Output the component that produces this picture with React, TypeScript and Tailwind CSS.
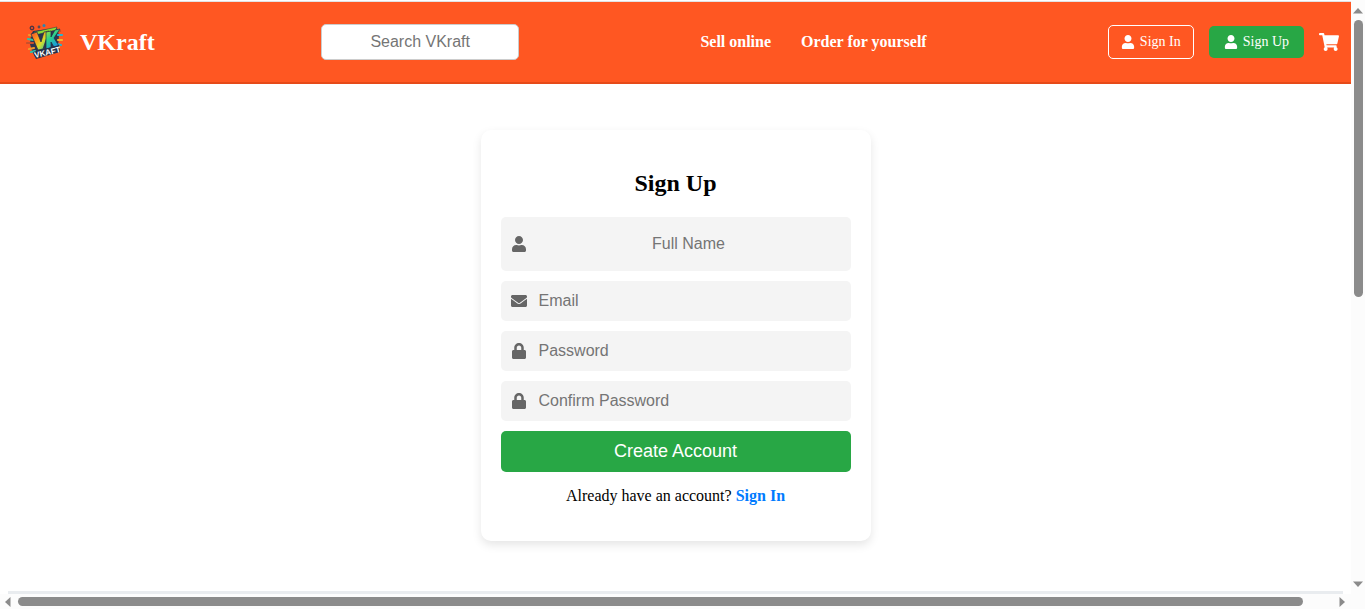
import type { ReactNode } from "react";
import { FaEnvelope, FaLock, FaShoppingCart, FaUser } from "react-icons/fa";

function Logo() {
  return (
    <svg viewBox="0 0 38 38" className="size-[38px] shrink-0" role="img" aria-label="VKraft logo">
      <defs>
        <linearGradient id="v" x1="0" y1="0" x2="1" y2="0.8">
          <stop offset="0" stopColor="#f0442c" />
          <stop offset="0.4" stopColor="#ff9a1f" />
          <stop offset="0.65" stopColor="#d6dc2c" />
          <stop offset="1" stopColor="#2cc4a0" />
        </linearGradient>
        <linearGradient id="k" x1="0" y1="0" x2="0.6" y2="1">
          <stop offset="0" stopColor="#b4e62c" />
          <stop offset="0.45" stopColor="#2fd08a" />
          <stop offset="1" stopColor="#1292ea" />
        </linearGradient>
      </defs>
      <path d="M7 8 31 5 33 12 32 24 33 29 9 34 6 28 4 21 5 12Z" fill="#2b3550" />
      <g strokeWidth="2.2" strokeLinecap="round">
        <path d="M3 12 8 13M3 26 8 25" stroke="#f09a2a" />
        <path d="M2 16 7 17M5 29 9 28" stroke="#2fc0a8" />
        <path d="M1 20H7M31 9 34 8" stroke="#c9502c" />
        <path d="M32 12H36M31 21 35 22" stroke="#22b4d0" />
        <path d="M32 17H36M30 25 33 25" stroke="#f3b52f" />
      </g>
      <circle cx="6" cy="5" r="1.9" fill="#d84b2c" stroke="#26304a" />
      <circle cx="13" cy="4" r="1.4" fill="#5a4a55" />
      <circle cx="18" cy="2.5" r="1.5" fill="#2785b5" />
      <path d="M8 9 31 4 30 7 9 12Z" fill="#8edb35" stroke="#202b45" strokeWidth="0.5" />
      <path d="M5 11 11 9 15 19 18 9 23 8 17 26 12 27Z" fill="url(#v)" stroke="#202b45" strokeWidth="0.7" />
      <path d="M20 9 25 8 25 14 29 7 34 6 28 15 33 23 28 24 25 19 25 25 20 26Z" fill="url(#k)" stroke="#202b45" strokeWidth="0.7" />
      <path d="M7 29 33 22 34 29 10 36Z" fill="#26304a" />
      <text x="9" y="35" transform="rotate(-13 9 35)" className="fill-white font-['Liberation_Sans'] text-[8px] font-bold">VKAFT</text>
    </svg>
  );
}

function Field({ id, label, type, icon }: { id: string; label: string; type: string; icon: ReactNode }) {
  const tall = id === "name";
  return (
    <div className={`flex items-center rounded-[5px] bg-[#f4f4f4] px-2.5 text-[#666] ${tall ? "h-[54px]" : "h-10"}`}>
      <label htmlFor={id} aria-label={label} className="flex w-4 shrink-0 justify-center">
        {icon}
      </label>
      <input
        id={id}
        type={type}
        aria-label={label}
        placeholder={label}
        className={`ml-3 min-w-0 flex-1 bg-transparent text-base text-black outline-none placeholder:text-[#757575] ${tall ? "pr-0.5 text-center" : ""}`}
      />
    </div>
  );
}

export default function App() {
  return (
    <div className="flex h-screen flex-col overflow-hidden bg-white font-['Liberation_Serif',serif] text-black">
      <div className="flex min-h-0 flex-1">
        <div className="flex min-w-0 flex-1 flex-col">
          <div className="mt-px h-px shrink-0 bg-[#e2e2e2]" />
          <header className="flex h-[82px] shrink-0 items-center justify-between border-b-2 border-[#e64a19] bg-[#ff5722] pr-3 pl-[26px] text-white">
            <a href="#home" className="flex w-[114px] items-center gap-4 text-2xl font-bold whitespace-nowrap">
              <Logo />
              VKraft
            </a>
            <input
              type="text"
              aria-label="Search VKraft"
              placeholder="Search VKraft"
              className="h-9 w-[198px] rounded-[5px] border border-[#ccc] bg-white px-2.5 text-center font-['Liberation_Sans',sans-serif] text-base text-black outline-none placeholder:text-[#757575]"
            />
            <nav className="flex gap-[30px] text-base font-bold">
              <a href="#sell">Sell online</a>
              <a href="#order">Order for yourself</a>
            </nav>
            <div className="flex items-center gap-[15px]">
              <button type="button" className="flex h-[34px] items-center gap-[5px] rounded-[5px] border border-white px-3 text-sm">
                <FaUser size={14} />
                Sign In
              </button>
              <button type="button" className="flex h-8 items-center gap-[5px] rounded-[5px] bg-[#28a745] px-[15px] text-sm">
                <FaUser size={14} />
                Sign Up
              </button>
              <a href="#cart" aria-label="Cart">
                <FaShoppingCart size={20} />
              </a>
            </div>
          </header>
          <main className="flex min-h-0 flex-1 flex-col items-center pt-[46px]">
            <form className="flex w-full max-w-[390px] flex-col gap-2.5 rounded-[10px] bg-white px-5 pt-[39px] pb-[35px] font-['Liberation_Sans',sans-serif] shadow-[0_4px_10px_rgba(0,0,0,0.1)]">
              <h1 className="mb-2.5 text-center font-['Liberation_Serif',serif] text-2xl leading-7 font-bold">Sign Up</h1>
              <Field id="name" label="Full Name" type="text" icon={<FaUser size={16} />} />
              <Field id="email" label="Email" type="email" icon={<FaEnvelope size={16} />} />
              <Field id="password" label="Password" type="password" icon={<FaLock size={16} />} />
              <Field id="confirm" label="Confirm Password" type="password" icon={<FaLock size={16} />} />
              <button type="button" className="h-[41px] rounded-[5px] bg-[#28a745] pb-0.5 text-lg text-white">Create Account</button>
              <p className="mt-1 text-center font-['Liberation_Serif',serif] text-base leading-5">
                Already have an account?{" "}
                <a href="#signin" className="font-bold text-[#007bff]">Sign In</a>
              </p>
            </form>
          </main>
          <div className="mx-2 h-[3px] shrink-0 bg-[#e9ecef]" />
        </div>
        <div className="flex w-3.5 shrink-0 flex-col items-center bg-[#fcfcfc] pt-2 pb-[7px]">
          <svg viewBox="0 0 10 6" className="h-1.5 w-2.5 shrink-0" aria-hidden="true"><path d="M0 5.5 5 0l5 5.5Z" fill="#8b8b8b" /></svg>
          <div className="flex w-full flex-1 flex-col items-center pt-1.5 pb-2">
            <div className="h-1/2 w-[9px] rounded-full bg-[#8b8b8b]" />
          </div>
          <svg viewBox="0 0 10 6" className="h-1.5 w-2.5 shrink-0" aria-hidden="true"><path d="M0 .5h10L5 6Z" fill="#8b8b8b" /></svg>
        </div>
      </div>
      <div className="flex h-[15px] shrink-0 items-center bg-[#fcfcfc] pr-5 pl-[5px]">
        <svg viewBox="0 0 6 10" className="h-2.5 w-1.5 shrink-0" aria-hidden="true"><path d="M5.5 0v10L0 5Z" fill="#8b8b8b" /></svg>
        <div className="mr-9 ml-[7px] h-[9px] flex-1 rounded-full bg-[#8b8b8b]" />
        <svg viewBox="0 0 6 10" className="h-2.5 w-1.5 shrink-0" aria-hidden="true"><path d="M.5 0v10L6 5Z" fill="#8b8b8b" /></svg>
      </div>
    </div>
  );
}
